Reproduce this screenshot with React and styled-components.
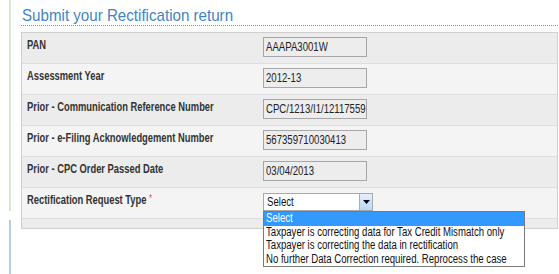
import styled, { createGlobalStyle } from "styled-components";

const GlobalStyle = createGlobalStyle`
  html, body {
    margin: 0;
    padding: 0;
    background: #ffffff;
  }
  body {
    font-family: "Liberation Sans", Arial, sans-serif;
  }
`;

const fields = [
  { label: "PAN", value: "AAAPA3001W" },
  { label: "Assessment Year", value: "2012-13" },
  { label: "Prior - Communication Reference Number", value: "CPC/1213/I1/12117559" },
  { label: "Prior - e-Filing Acknowledgement Number", value: "567359710030413" },
  { label: "Prior - CPC Order Passed Date", value: "03/04/2013" },
];

const options = [
  "Select",
  "Taxpayer is correcting data for Tax Credit Mismatch only",
  "Taxpayer is correcting the data in rectification",
  "No further Data Correction required. Reprocess the case",
];

export default function App() {
  return (
    <>
      <GlobalStyle />
      <Page>
        <Rail>
          <RailSegment color="#d4e9ce" size="211px" />
          <RailSegment color="#b8cce6" />
        </Rail>
        <Content>
          <Title>
            <Narrow scale={0.89}>Submit your Rectification return</Narrow>
          </Title>
          <Table>
            {fields.map((f, i) => (
              <Row key={f.label} odd={i % 2 === 0}>
                <Label>
                  <Narrow scale={0.78}>{f.label}</Narrow>
                </Label>
                <Cell>
                  <ReadOnlyBox>
                    <Narrow>{f.value}</Narrow>
                  </ReadOnlyBox>
                </Cell>
              </Row>
            ))}
            <Row odd={false}>
              <Label>
                <Narrow scale={0.78}>
                  Rectification Request Type <Required>*</Required>
                </Narrow>
              </Label>
              <Cell>
                <SelectBox>
                  <SelectText>
                    <Narrow>Select</Narrow>
                  </SelectText>
                  <ArrowButton>
                    <svg width="7" height="4" viewBox="0 0 7 4">
                      <path d="M0 0 H7 L3.5 4 Z" fill="#000" />
                    </svg>
                  </ArrowButton>
                </SelectBox>
                <OptionList>
                  {options.map((o, i) => (
                    <Option key={o} active={i === 0}>
                      <Narrow>{o}</Narrow>
                    </Option>
                  ))}
                </OptionList>
              </Cell>
            </Row>
            <Row odd={true} short />
          </Table>
        </Content>
      </Page>
    </>
  );
}

// the source screenshot is squeezed sideways; this narrows text the same way
const Narrow = styled.span`
  display: inline-block;
  white-space: nowrap;
  transform: scaleX(${(p) => p.scale || 0.8});
  transform-origin: 0 50%;
`;

const Page = styled.div`
  display: flex;
  height: 274px;
  overflow: hidden;
`;

const Rail = styled.div`
  display: flex;
  flex-direction: column;
  gap: 9px;
  width: 11px;
  flex-shrink: 0;
`;

const RailSegment = styled.div`
  box-sizing: border-box;
  width: 11px;
  border-right: 2px solid ${(p) => p.color};
  height: ${(p) => p.size || "auto"};
  flex: ${(p) => (p.size ? "0 0 auto" : "1")};
`;

const Content = styled.div`
  flex: 1;
  padding: 7px 1px 0 10px;
  min-width: 0;
`;

const Title = styled.h1`
  margin: 0 0 6px 0;
  padding: 0 0 0 1px;
  font-weight: normal;
  font-size: 17px;
  line-height: 18px;
  color: #4284c6;
  border-bottom: 1px dotted #8a8a8a;
`;

const Table = styled.div`
  border: 1px solid #cfcfcf;
  display: flex;
  flex-direction: column;
`;

const Row = styled.div`
  display: grid;
  grid-template-columns: 241px 1fr;
  height: ${(p) => (p.short ? "9px" : "30px")};
  background: ${(p) => (p.odd ? "#ececec" : "#f4f4f4")};
  border-bottom: 1px solid #dedede;
  &:last-child {
    border-bottom: none;
  }
`;

const Label = styled.div`
  padding: 5px 0 0 5px;
  font-size: 12px;
  font-weight: bold;
  color: #333333;
  white-space: nowrap;
`;

const Required = styled.span`
  color: #d9534f;
  font-weight: normal;
  font-size: 10px;
  vertical-align: top;
`;

const Cell = styled.div`
  position: relative;
  padding-top: 4px;
`;

const ReadOnlyBox = styled.div`
  box-sizing: border-box;
  width: 104px;
  height: 20px;
  padding: 0 2px;
  border: 1px solid #a6a6a6;
  background: #ededed;
  font-size: 12px;
  line-height: 18px;
  color: #222222;
  white-space: nowrap;
  overflow: hidden;
`;

const SelectBox = styled.div`
  box-sizing: border-box;
  display: flex;
  width: 110px;
  height: 18px;
  margin-top: 1px;
  border: 1px solid #a8a8a8;
  background: #ffffff;
`;

const SelectText = styled.div`
  flex: 1;
  padding: 0 3px;
  font-size: 12px;
  line-height: 16px;
  color: #111111;
`;

const ArrowButton = styled.div`
  width: 12px;
  display: flex;
  align-items: center;
  justify-content: center;
  border-left: 1px solid #86b6e4;
  background: linear-gradient(#e3f0fc, #b9d8f6);
`;

const OptionList = styled.div`
  position: absolute;
  top: 23px;
  left: 0;
  z-index: 2;
  box-sizing: border-box;
  width: 262px;
  border: 1px solid #7a7a7a;
  background: #ffffff;
`;

const Option = styled.div`
  height: 13.5px;
  padding: 0 2px;
  font-size: 12px;
  line-height: 13.5px;
  white-space: nowrap;
  color: ${(p) => (p.active ? "#ffffff" : "#111111")};
  background: ${(p) => (p.active ? "#3399ff" : "transparent")};
`;
